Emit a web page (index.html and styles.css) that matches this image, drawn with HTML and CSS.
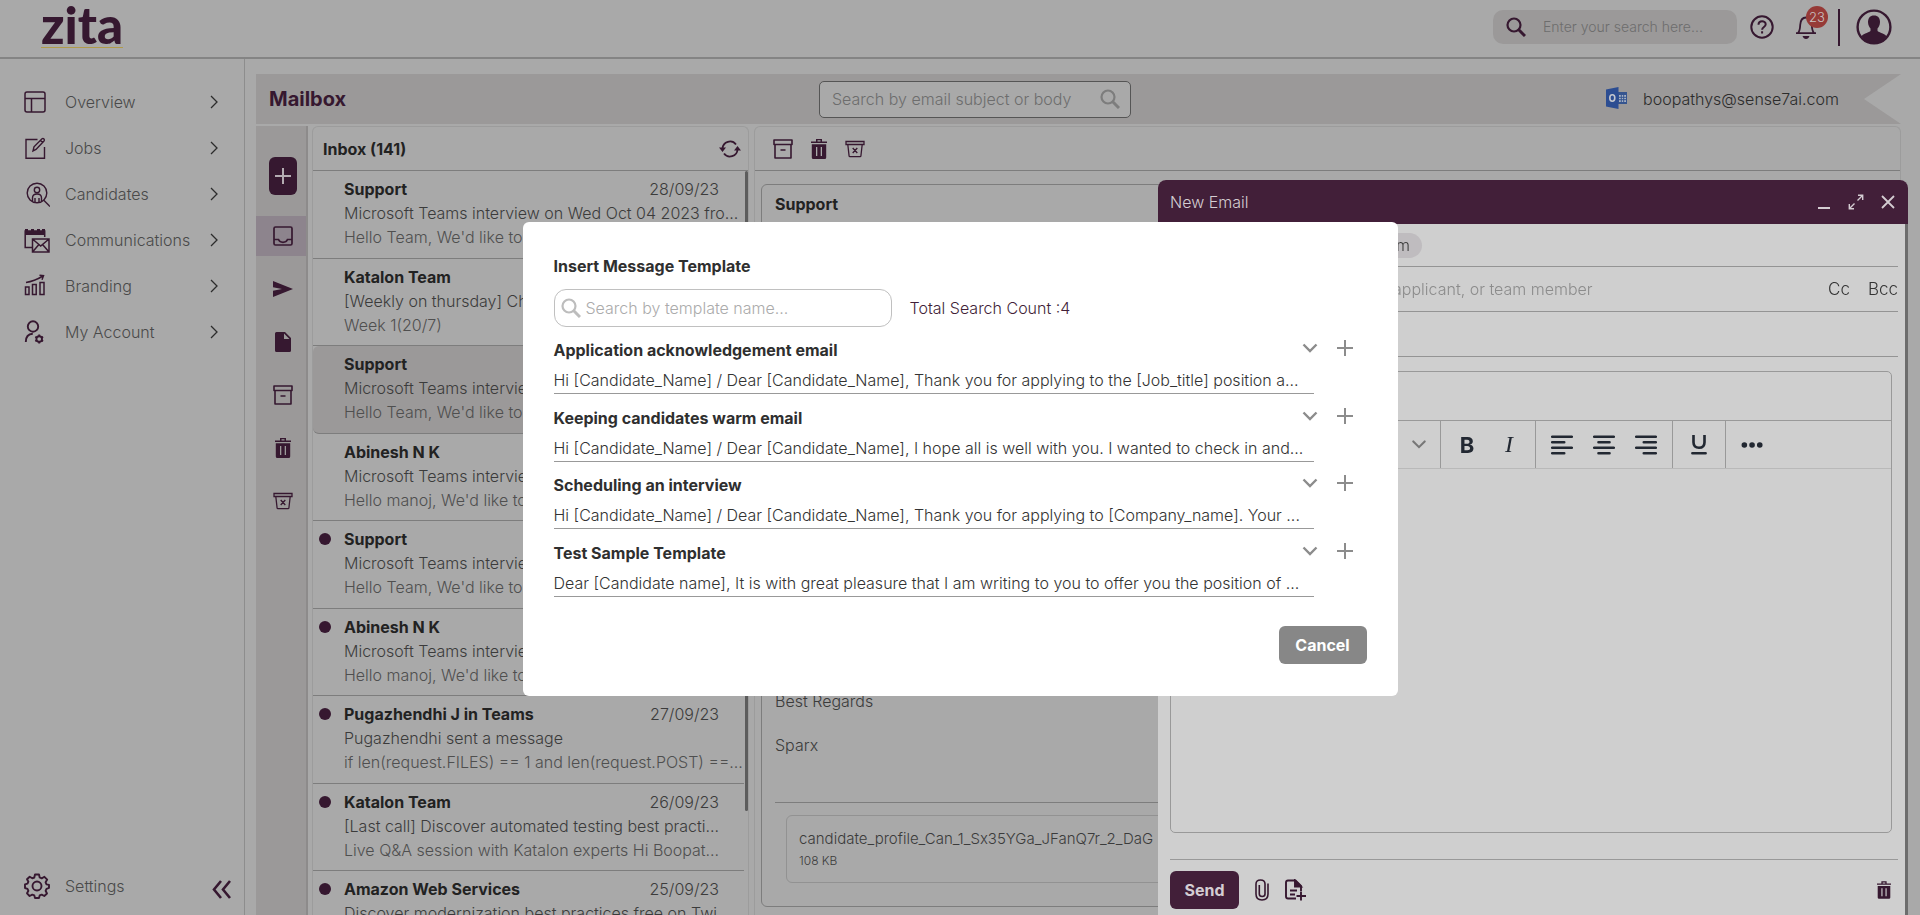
FILE: index.html
```html
<!DOCTYPE html>
<html lang="en">
<head>
<meta charset="utf-8">
<title>Zita - Mailbox</title>
<link rel="stylesheet" href="styles.css">
</head>
<body>
<svg class="defs" aria-hidden="true">
  <symbol id="i-chev" viewBox="0 0 8 14"><path d="M1 1l6 6-6 6" fill="none" stroke="currentColor" stroke-width="1.3"/></symbol>
  <symbol id="i-down" viewBox="0 0 16 10"><path d="M1.5 1.5L8 8l6.500-6.500" fill="none" stroke="currentColor" stroke-width="2.400"/></symbol>
  <symbol id="i-plus" viewBox="0 0 16 16"><path d="M8 0v16M0 8h16" fill="none" stroke="currentColor" stroke-width="2"/></symbol>
  <symbol id="i-search" viewBox="0 0 20 20"><circle cx="8" cy="8" r="6.500" fill="none" stroke="currentColor" stroke-width="2.200"/><path d="M12.500 12.500l6.500 6.500" stroke="currentColor" stroke-width="3"/></symbol>
  <symbol id="i-archive" viewBox="0 0 20 20"><path d="M1 1h18v4.500H1zM2 5.500h16V19H2zM7.500 11h5" fill="none" stroke="currentColor" stroke-width="1.600" stroke-linejoin="round"/></symbol>
  <symbol id="i-trash" viewBox="0 0 16 20"><path d="M0 2.500h5V0h6v2.500h5V4H0zM6.500 1.300v1.200h3V1.300z" fill="currentColor" fill-rule="evenodd"/><path d="M.8 5.300h14.400V18.500q0 1.500-1.500 1.500H2.300q-1.500 0-1.500-1.500zM5 8v9h1.300V8zm4.700 0v9H11V8z" fill="currentColor" fill-rule="evenodd"/></symbol>
  <symbol id="i-xbin" viewBox="0 0 20 20"><path d="M1 2.500h18V5.500H1zM2.800 5.500l1.300 11.500q.1.700.8.700h10.200q.7 0 .8-.700L17.200 5.500M7.700 9l4.600 5M12.300 9l-4.600 5" fill="none" stroke="currentColor" stroke-width="1.300"/></symbol>
</svg>

<header class="topbar">
  <a class="logo" href="#">zita</a>
  <div class="topbar-tools">
    <label class="site-search">
      <svg class="s20" role="img" aria-label="Search"><use href="#i-search"/></svg>
      <input type="text" placeholder="Enter your search here...">
    </label>
    <button class="icon-btn" aria-label="Help"><svg class="s24" viewBox="0 0 24 24" fill="none" stroke="currentColor" stroke-width="2"><circle cx="12" cy="12" r="10.700"/><path d="M8.500 9.700c0-4.700 7.200-4.500 7.200-.4 0 2.700-3.600 2.700-3.600 5.500M12.100 16.300v2.200"/></svg></button>
    <button class="icon-btn bell" aria-label="Notifications"><svg viewBox="0 0 22 24" width="22" height="24"><path d="M1 18.200h20M3 18c2-2.300 2-4 2.200-8C5.500 5 7.500 2.500 11 2.500S16.500 5 16.800 10c.2 4 .2 5.700 2.200 8" fill="none" stroke="currentColor" stroke-width="1.800"/><path d="M7.500 21h7q-1 3-3.500 3t-3.500-3z" fill="currentColor"/></svg><span class="badge">23</span></button>
    <span class="divider"></span>
    <button class="icon-btn" aria-label="Profile"><svg width="36" height="36" viewBox="0 0 36 36"><circle cx="18" cy="18" r="16.400" fill="none" stroke="currentColor" stroke-width="2.400"/><path d="M18 6.500c4 0 6 2.700 6 6.500 0 3.500-1.500 5.300-2.500 6.600v2.200c0 1.700 7 2.200 8.800 5.400C28 31.500 23.500 34 18 34S8 31.500 5.700 27.200c1.800-3.200 8.800-3.700 8.800-5.400v-2.200c-1-1.300-2.500-3.100-2.500-6.600 0-3.800 2-6.500 6-6.500z" fill="currentColor"/></svg></button>
  </div>
</header>

<div class="shell">
  <nav class="sidebar">
    <ul class="menu">
      <li><a href="#"><svg class="nav-icon" viewBox="0 0 26 26" fill="none" stroke="currentColor" stroke-width="1.500"><rect x="1" y="3" width="20" height="20" rx="2"/><path d="M1 9.500h20M7.500 9.500V23"/></svg><span>Overview</span><svg class="chev"><use href="#i-chev"/></svg></a></li>
      <li><a href="#"><svg class="nav-icon" viewBox="0 0 26 26" fill="none" stroke="currentColor" stroke-width="1.400"><path d="M13.500 4.500H2v18.700h18.500V12"/><path d="M9 16l1-4.200 8-8q1-.7 2 .2.800 1 0 2l-8 8.500zM16.500 5.500l2.300 2.300"/></svg><span>Jobs</span><svg class="chev"><use href="#i-chev"/></svg></a></li>
      <li><a href="#"><svg class="nav-icon" viewBox="0 0 26 26" fill="none" stroke="currentColor" stroke-width="1.400"><circle cx="13" cy="12" r="9.800"/><path d="M19.500 19l6.500 6.500"/><circle cx="13" cy="9" r="2.700"/><path d="M8.500 20.500V17q0-4 4.500-4t4.500 4v3.500M11 21v-4M15 21v-4"/></svg><span>Candidates</span><svg class="chev"><use href="#i-chev"/></svg></a></li>
      <li><a href="#"><svg class="nav-icon" viewBox="0 0 26 26" fill="none" stroke="currentColor" stroke-width="1.500"><path d="M8 20.500H1.200V4h19.500v6"/><path d="M1 2h3v2h3V2h3v2h3V2h3v2h2V2h3v6H1z" fill="currentColor" stroke="none"/><path d="M8.500 12H25v13H8.500zM8.500 12l8.200 7 8.300-7M8.500 25l6-7M25 25l-6-7"/></svg><span>Communications</span><svg class="chev"><use href="#i-chev"/></svg></a></li>
      <li><a href="#"><svg class="nav-icon" viewBox="0 0 26 26" fill="none" stroke="currentColor" stroke-width="1.500"><rect x="1.500" y="14" width="3.500" height="7.500"/><rect x="8.500" y="11.500" width="3.700" height="10"/><rect x="16" y="9.500" width="4" height="12"/><path d="M2 9.500c7-1 12-3.500 17-6.500M15.500 2.200l4 .5-1.500 4"/></svg><span>Branding</span><svg class="chev"><use href="#i-chev"/></svg></a></li>
      <li><a href="#"><svg class="nav-icon" viewBox="0 0 26 26" fill="none" stroke="currentColor" stroke-width="1.900"><circle cx="9" cy="7.500" r="5.200"/><path d="M1.800 23c0-5 2.500-8 7-8.200"/><circle cx="15.200" cy="20" r="2.800"/><path d="M15.200 15.500v2M15.200 22.500v2M11.300 17.700l1.700 1M17.400 21.300l1.700 1M11.300 22.300l1.700-1M17.400 18.700l1.700-1"/></svg><span>My Account</span><svg class="chev"><use href="#i-chev"/></svg></a></li>
    </ul>
    <div class="sidebar-foot">
      <a href="#"><svg class="nav-icon" viewBox="0 0 26 26" fill="none" stroke="currentColor" stroke-width="1.900"><path d="M11 1.500h4l.7 3 2 .9 2.700-1.600 2.800 2.800-1.600 2.700.9 2 2.500.6v3l-2.500.9-.9 2 1.400 2.700-2.700 2.500-2.600-1.400-2 .8-.7 2.600h-4l-.7-2.600-2-.8L5.600 23 3 20.300l1.400-2.500-.9-2L1 15v-3.700l2.500-.6.9-2L3 6.300l2.700-2.600 2.600 1.600 2-.8z" stroke-linejoin="round"/><circle cx="13" cy="13" r="4.500"/></svg><span>Settings</span></a>
      <button class="icon-btn" aria-label="Collapse"><svg width="19" height="19" viewBox="0 0 19 19" fill="none" stroke="currentColor" stroke-width="2.600"><path d="M9 1L2 9.500 9 18M18 1l-7 8.500L18 18"/></svg></button>
    </div>
  </nav>

  <main class="main">
    <div class="band">
      <h1>Mailbox</h1>
      <label class="mail-search"><input type="text" placeholder="Search by email subject or body"><svg class="s20" role="img" aria-label="Search"><use href="#i-search"/></svg></label>
      <div class="account">
        <svg width="22" height="22" viewBox="0 0 22 22"><path d="M11 5h10v12H11z" fill="#36558f"/><path d="M13 8h7v7h-7z" fill="#a9b2c4"/><path d="M13 10.300h7M13 12.700h7M15.300 8v7M17.700 8v7" stroke="#36558f"/><path d="M0 2.500L12.500 0v22L0 19.500z" fill="#2c4d92"/><ellipse cx="6.300" cy="11" rx="2.500" ry="3.200" fill="none" stroke="#c3c6ce" stroke-width="1.600"/></svg>
        <span>boopathys@sense7ai.com</span>
      </div>
    </div>
    <div class="workspace">
      <div class="rail">
        <button class="compose-btn" aria-label="Compose"><svg class="s16"><use href="#i-plus"/></svg></button>
        <button class="rail-btn active" aria-label="Inbox"><svg class="s20" viewBox="0 0 20 20" fill="none" stroke="currentColor" stroke-width="1.700"><rect x="1" y="1" width="18" height="18" rx="1.500"/><path d="M1 13.500h4.500c1.500 3.700 7.500 3.700 9 0H19"/></svg></button>
        <button class="rail-btn" aria-label="Sent"><svg class="s20" viewBox="0 0 20 20"><path d="M0 2l20 8-20 8v-6.300L9 10 0 8.300z" fill="currentColor"/></svg></button>
        <button class="rail-btn" aria-label="Drafts"><svg class="s20" viewBox="0 0 20 20"><path d="M3.500 0H12l6 6v12.500q0 1.500-1.500 1.500h-13Q2 20 2 18.500v-17Q2 0 3.500 0zM11 1.500V7h5.500z" fill="currentColor" fill-rule="evenodd"/></svg></button>
        <button class="rail-btn" aria-label="Archive"><svg class="s20"><use href="#i-archive"/></svg></button>
        <button class="rail-btn" aria-label="Trash"><svg class="s20"><use href="#i-trash"/></svg></button>
        <button class="rail-btn" aria-label="Junk"><svg class="s20"><use href="#i-xbin"/></svg></button>
      </div>

      <section class="list-panel">
        <div class="panel-head"><h2>Inbox (141)</h2><button class="icon-btn" aria-label="Refresh"><svg width="22" height="20" viewBox="0 0 22 20" fill="none" stroke="currentColor" stroke-width="1.800"><path d="M3.500 10V9.500a7.500 7.500 0 0 1 13.500-4M18.500 10v.5a7.500 7.500 0 0 1-13.500 4"/><path d="M0 8.500h7L3.500 13zM15 11.500h7L18.500 7z" fill="currentColor" stroke="none"/></svg></button></div>
        <ul class="mails">
          <li><i></i><b>Support</b><time>28/09/23</time><p>Microsoft Teams interview on Wed Oct 04 2023 fro...</p><p>Hello Team, We'd like to</p></li>
          <li><i></i><b>Katalon Team</b><p>[Weekly on thursday] Check</p><p>Week 1(20/7)</p></li>
          <li class="current"><i></i><b>Support</b><p>Microsoft Teams interview</p><p>Hello Team, We'd like to</p></li>
          <li><i></i><b>Abinesh N K</b><p>Microsoft Teams interview</p><p>Hello manoj, We'd like to</p></li>
          <li class="unread"><i></i><b>Support</b><p>Microsoft Teams interview</p><p>Hello Team, We'd like to</p></li>
          <li class="unread"><i></i><b>Abinesh N K</b><p>Microsoft Teams interview</p><p>Hello manoj, We'd like to</p></li>
          <li class="unread"><i></i><b>Pugazhendhi J in Teams</b><time>27/09/23</time><p>Pugazhendhi sent a message</p><p>if len(request.FILES) == 1 and len(request.POST) ==...</p></li>
          <li class="unread"><i></i><b>Katalon Team</b><time>26/09/23</time><p>[Last call] Discover automated testing best practi...</p><p>Live Q&amp;A session with Katalon experts Hi Boopat...</p></li>
          <li class="unread"><i></i><b>Amazon Web Services</b><time>25/09/23</time><p>Discover modernization best practices free on Twi...</p></li>
        </ul>
      </section>

      <section class="read-panel">
        <div class="panel-head tools">
          <button class="icon-btn" aria-label="Archive"><svg class="s20"><use href="#i-archive"/></svg></button>
          <button class="icon-btn" aria-label="Delete"><svg class="s20"><use href="#i-trash"/></svg></button>
          <button class="icon-btn" aria-label="Junk"><svg class="s20"><use href="#i-xbin"/></svg></button>
        </div>
        <article class="message">
          <h3>Support</h3>
          <div class="message-end"><p>Best Regards</p><p>Sparx</p></div>
          <div class="attachments"><div class="attachment"><span>candidate_profile_Can_1_Sx35YGa_JFanQ7r_2_DaG</span><small>108 KB</small></div></div>
        </article>
      </section>
    </div>
  </main>
</div>

<section class="compose">
  <header class="compose-head">
    <h2>New Email</h2>
    <button class="icon-btn" aria-label="Minimize"><svg class="s16" viewBox="0 0 16 16"><path d="M2 14h12" stroke="currentColor" stroke-width="2"/></svg></button>
    <button class="icon-btn" aria-label="Expand"><svg class="s16" viewBox="0 0 16 16" fill="none" stroke="currentColor" stroke-width="1.400"><path d="M9.500 6.500l5-5M10 1.300h4.700V6M6.500 9.500l-5 5M1.300 10v4.700H6"/></svg></button>
    <button class="icon-btn" aria-label="Close"><svg class="s16" viewBox="0 0 16 16"><path d="M2 2l12 12M14 2L2 14" stroke="currentColor" stroke-width="1.800"/></svg></button>
  </header>
  <div class="compose-body">
    <div class="field"><span class="field-name">From</span><span class="chip">boopathys@sense7ai.com</span></div>
    <div class="field"><label class="field-name" for="to">To</label><input id="to" placeholder="Add or search candidate, applicant, or team member"><button class="text-btn">Cc</button><button class="text-btn">Bcc</button></div>
    <div class="field"><input aria-label="Subject"></div>
    <div class="editor">
      <div class="editor-menu"></div>
      <div class="toolbar">
        <div class="group grow"><button aria-label="Style"><svg width="12" height="8"><use href="#i-down"/></svg></button></div>
        <div class="group"><button class="bold">B</button><button class="ital">I</button></div>
        <div class="group">
          <button aria-label="Align left"><svg viewBox="0 0 20 18"><path d="M1 1.500h18M1 6.500h11M1 11.500h18M1 16.500h11"/></svg></button>
          <button aria-label="Align center"><svg viewBox="0 0 20 18"><path d="M1 1.500h18M5 6.500h10M1 11.500h18M5 16.500h10"/></svg></button>
          <button aria-label="Align right"><svg viewBox="0 0 20 18"><path d="M1 1.500h18M8 6.500h11M1 11.500h18M8 16.500h11"/></svg></button>
        </div>
        <div class="group"><button aria-label="Underline"><svg viewBox="0 0 20 18"><path d="M5 0v6.500q0 5 5 5t5-5V0M4 16.500h12"/></svg></button></div>
        <div class="group last"><button aria-label="More"><svg viewBox="0 0 20 18"><path d="M3 9h.1M10 9h.1M17 9h.1" class="dots"/></svg></button></div>
      </div>
      <textarea class="editor-text" aria-label="Message"></textarea>
    </div>
    <footer class="compose-foot">
      <button class="send">Send</button>
      <button class="icon-btn" aria-label="Attach"><svg width="14" height="22" viewBox="0 0 14 22" fill="none" stroke="currentColor" stroke-width="1.600"><path d="M13 4.500V15q0 6-6 6t-6-6V5q0-4 4.500-4T10 5v10q0 2.500-2.800 2.500T4.300 15V6"/></svg></button>
      <button class="icon-btn" aria-label="Insert template"><svg width="21" height="22" viewBox="0 0 21 22" fill="none" stroke="currentColor" stroke-width="1.900"><path d="M11 19.500H3q-2 0-2-2v-14q0-2 2-2h7.500L16 7v5M5 11.500h7M5 15.500h5M16 12.500v9M11.500 17H21"/><path d="M10 1.500V7.500h6z" fill="currentColor"/></svg></button>
      <button class="icon-btn discard" aria-label="Discard"><svg width="14" height="18"><use href="#i-trash"/></svg></button>
    </footer>
  </div>
</section>

<div class="modal-layer">
  <section class="modal" role="dialog" aria-labelledby="modal-title">
    <h2 id="modal-title">Insert Message Template</h2>
    <div class="modal-search">
      <label><svg class="s20" role="img" aria-label="Search"><use href="#i-search"/></svg><input type="text" placeholder="Search by template name..."></label>
      <span>Total Search Count :4</span>
    </div>
    <ul class="templates">
      <li><div class="tpl"><h3>Application acknowledgement email</h3><p>Hi [Candidate_Name] / Dear [Candidate_Name], Thank you for applying to the [Job_title] position a...</p></div><button class="icon-btn" aria-label="Show"><svg width="16" height="10"><use href="#i-down"/></svg></button><button class="icon-btn" aria-label="Insert"><svg class="s16"><use href="#i-plus"/></svg></button></li>
      <li><div class="tpl"><h3>Keeping candidates warm email</h3><p>Hi [Candidate_Name] / Dear [Candidate_Name], I hope all is well with you. I wanted to check in and...</p></div><button class="icon-btn" aria-label="Show"><svg width="16" height="10"><use href="#i-down"/></svg></button><button class="icon-btn" aria-label="Insert"><svg class="s16"><use href="#i-plus"/></svg></button></li>
      <li><div class="tpl"><h3>Scheduling an interview</h3><p>Hi [Candidate_Name] / Dear [Candidate_Name], Thank you for applying to [Company_name]. Your ...</p></div><button class="icon-btn" aria-label="Show"><svg width="16" height="10"><use href="#i-down"/></svg></button><button class="icon-btn" aria-label="Insert"><svg class="s16"><use href="#i-plus"/></svg></button></li>
      <li><div class="tpl"><h3>Test Sample Template</h3><p>Dear [Candidate name], It is with great pleasure that I am writing to you to offer you the position of ...</p></div><button class="icon-btn" aria-label="Show"><svg width="16" height="10"><use href="#i-down"/></svg></button><button class="icon-btn" aria-label="Insert"><svg class="s16"><use href="#i-plus"/></svg></button></li>
    </ul>
    <button class="cancel">Cancel</button>
  </section>
</div>
</body>
</html>
```

FILE: styles.css
```css
:root {
  --page: #a9a9a9;
  --band: #9b9999;
  --plum: #361830;
  --plum-lit: #421f39;
  --line: #7d7d7d;
  --soft: #999;
  --sheet: #cfcfcf;
  --text: #3b3b3b;
}
* { box-sizing: border-box; }
body {
  margin: 0;
  height: 100vh;
  overflow: hidden;
  display: flex;
  flex-direction: column;
  background: var(--page);
  color: var(--text);
  font: 300 16px/24px Inter, "Liberation Sans", sans-serif;
}
h1, h2, h3, p, ul { margin: 0; padding: 0; }
h2, h3 { font-size: 16px; line-height: 24px; font-weight: 700; color: #222; }
ul { list-style: none; }
a { color: inherit; text-decoration: none; }
button, input, textarea { font: inherit; color: inherit; border: 0; padding: 0; background: none; }
input { min-width: 0; flex: 1; outline: 0; }
svg { display: block; flex: none; }
.defs { position: absolute; width: 0; height: 0; }
.s16 { width: 16px; height: 16px; }
.s20 { width: 20px; height: 20px; }
.s24 { width: 24px; height: 24px; }
.icon-btn { display: flex; align-items: center; justify-content: center; color: var(--plum); }

.topbar {
  height: 59px;
  flex: none;
  display: flex;
  align-items: flex-start;
  justify-content: space-between;
  padding: 0 28px 0 41px;
  border-bottom: 2px solid #848484;
}
.logo {
  height: 48px;
  font: 900 51px/50px Lato, sans-serif;
  color: var(--plum);
  border-bottom: 1px solid #b09a4a;
}
.topbar-tools { display: flex; align-items: center; height: 54px; }
.site-search {
  display: flex;
  align-items: center;
  gap: 17px;
  width: 244px;
  height: 34px;
  margin-right: 13px;
  padding: 0 13px;
  border-radius: 10px;
  background: var(--band);
  color: var(--plum);
  font-size: 14px;
}
::placeholder { color: #6d6d6d; opacity: 1; }
.bell { position: relative; margin-left: 21px; }
.badge {
  position: absolute;
  left: 11px;
  top: -9px;
  width: 22px;
  border-radius: 50%;
  background: #963a37;
  color: #c9c0c0;
  font-size: 13px;
  line-height: 22px;
}
.divider { width: 2px; height: 37px; margin: 0 16px 0 21px; background: var(--plum); }

.shell { flex: 1; min-height: 0; display: flex; }
.sidebar {
  width: 245px;
  flex: none;
  display: flex;
  flex-direction: column;
  justify-content: space-between;
  padding: 20px 13px 6px 24px;
  border-right: 1px solid #8d8d8d;
  color: #4a4a4a;
}
.menu { display: grid; grid-auto-rows: 46px; }
.menu a, .sidebar-foot a { display: flex; align-items: center; height: 100%; gap: 15px; }
.menu span { flex: 1; }
.nav-icon { width: 26px; height: 26px; color: var(--plum); }
.chev { width: 8px; height: 14px; margin-right: 13px; color: #2c2c2c; }
.sidebar-foot { display: flex; justify-content: space-between; height: 46px; }
.sidebar-foot .icon-btn { padding-top: 6px; }

.main { flex: 1; min-width: 0; display: flex; flex-direction: column; padding: 15px 19px 0 11px; }
.band {
  flex: none;
  height: 50px;
  display: grid;
  grid-template-columns: 5fr 312px 7fr;
  align-items: center;
  padding-left: 13px;
  background: var(--band);
  clip-path: polygon(0 0, 100% 0, calc(100% - 37px) 50%, 100% 100%, 0 100%);
}
.band h1 { font-size: 20px; line-height: 28px; color: var(--plum); }
.mail-search {
  display: flex;
  align-items: center;
  height: 37px;
  padding: 0 10px 0 12px;
  border: 1px solid #555;
  border-radius: 5px;
  background: var(--page);
  color: #7d7d7d;
}
.account { display: flex; justify-content: flex-end; gap: 15px; padding-right: 62px; color: #2c2c2c; }

.workspace { flex: 1; min-height: 0; display: flex; padding-top: 2px; }
.rail {
  width: 52px;
  flex: none;
  display: flex;
  flex-direction: column;
  align-items: center;
  padding-top: 31px;
  gap: 13px;
  background: var(--band);
  border-right: 2px solid #8d8b8b;
}
.compose-btn {
  width: 28px;
  height: 38px;
  margin: 0 0 8px 3px;
  display: grid;
  place-items: center;
  border-radius: 6px;
  background: var(--plum);
  color: #b4acb2;
}
.rail-btn { width: 100%; height: 40px; padding-left: 3px; display: grid; place-items: center; color: var(--plum); }
.rail-btn.active { background: #8d848d; }

.list-panel { width: 437px; flex: none; margin-left: 4px; border: solid #9c9c9c; border-width: 1px 1px 0; border-radius: 6px 6px 0 0; display: flex; flex-direction: column; }
.panel-head { flex: none; height: 44px; display: flex; align-items: center; justify-content: space-between; padding: 0 7px 0 10px; border-bottom: 1px solid var(--line); }
.panel-head .icon-btn { height: 32px; }
.mails { position: relative; flex: 1; min-height: 0; overflow: hidden; padding-right: 4px; }
.mails::after { content: ""; position: absolute; right: 0; top: 0; width: 3px; height: 640px; background: #5c5c5c; border-radius: 2px; }
.mails li {
  display: grid;
  grid-template-columns: 12px 1fr auto;
  column-gap: 13px;
  align-content: start;
  align-items: center;
  height: 88px;
  padding: 6px 25px 0 6px;
  border-bottom: 1px solid var(--line);
}
.mails li:nth-child(even) { height: 87px; }
.mails .current { background: var(--band); border-radius: 6px; }
.mails i { width: 12px; height: 12px; border-radius: 50%; }
.mails .unread i { background: var(--plum); }
.mails b { font-weight: 700; color: #222; }
.mails p { grid-column: 2 / 4; white-space: nowrap; }
.mails p + p { color: #4f4f4f; }

.read-panel { flex: 1; min-width: 0; margin-left: 5px; border: solid #9c9c9c; border-width: 1px 1px 0; border-radius: 6px 6px 0 0; display: flex; flex-direction: column; }
.panel-head.tools { justify-content: flex-start; gap: 16px; padding-left: 18px; }
.message { flex: 1; display: flex; flex-direction: column; margin: 13px 10px 8px 6px; padding: 7px 13px 23px; border: 1px solid var(--line); border-radius: 6px; }
.message-end { margin-top: auto; display: grid; gap: 20px; padding-bottom: 45px; }
.attachments { border-top: 1px solid var(--line); padding: 12px 11px 0; }
.attachment { display: grid; gap: 2px; height: 68px; padding: 12px; border: 1px solid #929292; border-radius: 6px; font-size: 15px; line-height: 22px; }
.attachment small { font-size: 12px; line-height: 18px; }

.compose {
  position: fixed;
  right: 12px;
  top: 180px;
  bottom: 0;
  width: 750px;
  display: flex;
  flex-direction: column;
  background: var(--sheet);
  border-radius: 8px 8px 0 0;
  overflow: hidden;
}
.compose-head { flex: none; height: 44px; display: flex; align-items: center; gap: 16px; padding: 0 12px; background: var(--plum-lit); color: #d4cdd2; }
.compose-head h2 { flex: 1; font-weight: 300; color: inherit; }
.compose-head .icon-btn { color: inherit; }
.compose-body { flex: 1; display: flex; flex-direction: column; padding: 0 7px 6px 12px; border-right: 3px solid #6d6d6d; }
.field { flex: none; height: 45px; display: flex; align-items: center; gap: 12px; border-bottom: 1px solid #949494; }
.field:first-child { height: 43px; }
.field-name { width: 20px; }
.chip { padding: 0 12px; border-radius: 13px; background: #bfbcbf; line-height: 25px; }
.field ::placeholder { color: #8c8c8c; }
.text-btn { margin-left: 6px; color: #333; font-size: 17px; }
.editor { flex: 1; display: flex; flex-direction: column; margin: 14px 6px 26px 0; border: 1px solid #999; border-radius: 5px; }
.editor-menu { height: 48px; }
.toolbar { display: flex; height: 49px; border: solid #999; border-width: 1px 0; border-bottom-color: #b9b9b9; color: #222832; }
.group { display: flex; align-items: center; padding: 0 5px; border-right: 1px solid #999; }
.group button { width: 42px; display: grid; place-items: center; }
.group svg { width: 22px; height: 20px; fill: none; stroke: currentColor; stroke-width: 2.4; stroke-linecap: round; }
.group .dots { stroke-width: 5; }
.grow { width: 270px; justify-content: flex-end; padding: 0; }
.grow svg { width: 14px; height: 9px; stroke-width: 1; color: #777; }
.last { border: 0; }
.bold { font-size: 22px; font-weight: 700; }
.ital { font: italic 24px "Liberation Serif", serif; }
.editor-text { flex: 1; width: 100%; resize: none; outline: 0; }
.compose-foot { flex: none; display: flex; align-items: center; gap: 16px; padding: 11px 7px 0 0; border-top: 1px solid #999; }
.send { width: 69px; height: 38px; border-radius: 6px; background: var(--plum-lit); color: #d4cdd2; font-weight: 700; }
.discard { margin-left: auto; }

.modal-layer { position: fixed; inset: 0; display: grid; place-items: center; padding-top: 3px; }
.modal { width: 875px; display: flex; flex-direction: column; padding: 32px 31px; border-radius: 6px; background: #fff; color: #333; }
.modal h2, .modal h3 { color: #2f2f2f; }
.modal-search { display: flex; align-items: center; gap: 18px; margin: 11px 0; color: #421f39; }
.modal-search label { display: flex; align-items: center; gap: 5px; width: 338px; height: 38px; padding: 0 6px; border: 1px solid #c0c0c0; border-radius: 12px; color: #bdbdbd; }
.modal-search ::placeholder { color: #ababab; }
.templates li { display: flex; align-items: flex-start; height: 68px; }
.templates li:nth-child(even) { height: 67px; }
.templates .icon-btn { height: 20px; color: #8c8c8c; margin-right: 19px; }
.templates .icon-btn:last-child { margin-right: 0; }
.tpl { width: 760px; flex: none; height: 56px; margin-right: -12px; border-bottom: 1px solid #999; white-space: nowrap; }
.tpl p { margin-top: 6px; }
.cancel { align-self: flex-end; width: 88px; height: 38px; margin-top: 18px; border-radius: 6px; background: #878787; color: #fff; font-weight: 700; }
```
